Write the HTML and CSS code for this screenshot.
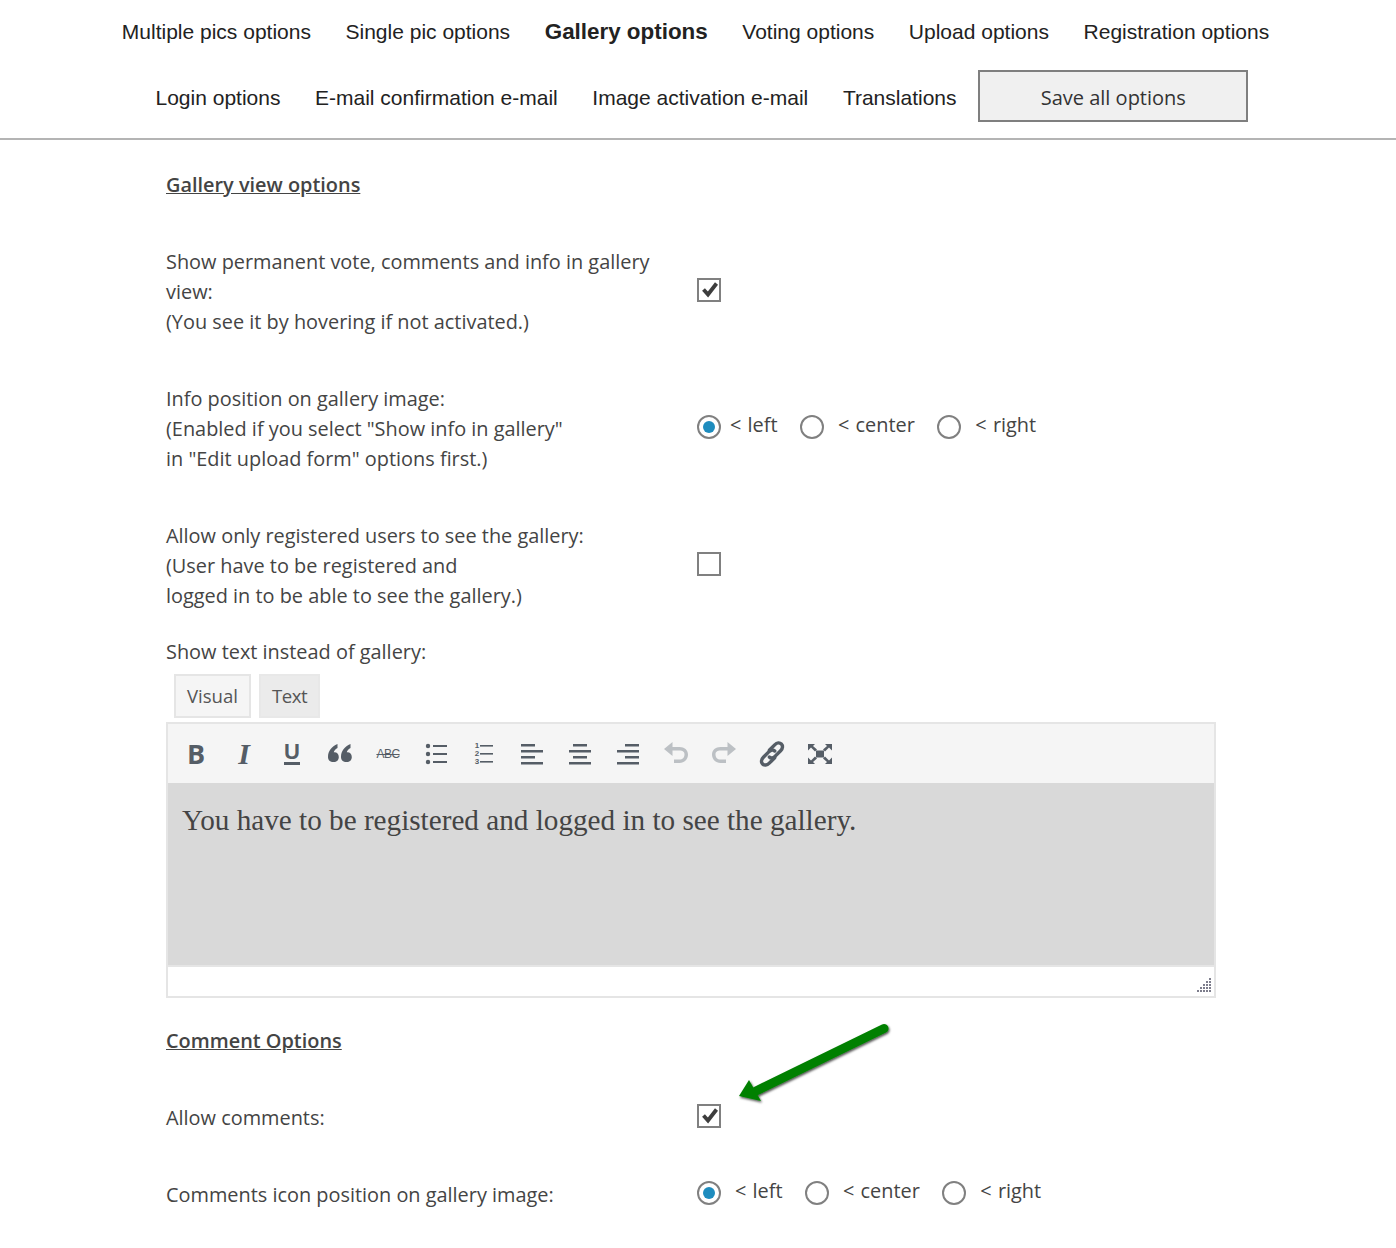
FILE: index.html
```html
<!DOCTYPE html>
<html>
	<head>
		<title>Gallery options</title>
		<link rel="stylesheet" href="styles.css">
	</head>

	<body>
		<div id="nav">
			<div class="navRow">
				<a class="navLink">Multiple pics options</a>
				<a class="navLink">Single pic options</a>
				<a class="navLink active">Gallery options</a>
				<a class="navLink">Voting options</a>
				<a class="navLink">Upload options</a>
				<a class="navLink">Registration options</a>
			</div>
			<div class="navRow second">
				<a class="navLink">Login options</a>
				<a class="navLink">E-mail confirmation e-mail</a>
				<a class="navLink">Image activation e-mail</a>
				<a class="navLink">Translations</a>
				<button id="saveAll">Save all options</button>
			</div>
		</div>

		<div id="main">
			<div class="heading first">Gallery view options</div>

			<div class="row">
				<div class="label">Show permanent vote, comments and info in gallery view:<br>(You see it by hovering if not activated.)</div>
				<label class="check">
					<input type="checkbox" checked>
					<svg viewBox="0 0 24 24"><path d="M6.500 11.500L11 16.500 19.500 5.500" fill="none" stroke="#3d3d3d" stroke-width="3.800"/></svg>
				</label>
			</div>

			<div class="row">
				<div class="label">Info position on gallery image:<br>(Enabled if you select "Show info in gallery"<br>in "Edit upload form" options first.)</div>
				<div class="radios">
					<input type="radio" name="info" checked><span class="radioText firstText">&lt; left</span>
					<input type="radio" name="info"><span class="radioText">&lt; center</span>
					<input type="radio" name="info"><span class="radioText">&lt; right</span>
				</div>
			</div>

			<div class="row">
				<div class="label">Allow only registered users to see the gallery:<br>(User have to be registered and<br>logged in to be able to see the gallery.)</div>
				<label class="check"><input type="checkbox"></label>
			</div>

			<div class="label textLabel">Show text instead of gallery:</div>

			<div id="tabs">
				<div class="tab">Visual</div>
				<div class="tab textTab">Text</div>
			</div>

			<div id="editor">
				<div id="toolbar">
					<div class="tool"><span class="letterB">B</span></div>
					<div class="tool"><span class="letterI">I</span></div>
					<div class="tool"><span class="letterU">U</span></div>
					<div class="tool">
						<svg class="bigIcon" viewBox="0 0 24 20"><path d="M0 13C0 7 3.500 2.500 9.500 0v4C7 5.500 6 7 5.800 8.200c2.700-.4 5 1.400 5 4.700 0 3-2 5.100-5.200 5.100C2 18 0 16 0 13zM13 13c0-6 3.500-10.500 9.500-13v4C20 5.500 19 7 18.800 8.200c2.700-.4 5 1.400 5 4.700 0 3-2 5.100-5.200 5.100C15 18 13 16 13 13z" fill="#555d66"/></svg>
					</div>
					<div class="tool"><span class="letterS">ABC</span></div>
					<div class="tool">
						<svg viewBox="0 0 24 24"><g fill="#555d66"><circle cx="4" cy="4" r="2.200"/><circle cx="4" cy="12" r="2.200"/><circle cx="4" cy="20" r="2.200"/><rect x="9" y="3" width="14" height="2"/><rect x="9" y="11" width="14" height="2"/><rect x="9" y="19" width="14" height="2"/></g></svg>
					</div>
					<div class="tool olTool">
						<span class="olNums"><span>1</span><span>2</span><span>3</span></span>
						<svg viewBox="0 0 14 24"><g fill="#555d66"><rect x="1" y="3" width="13" height="1.600"/><rect x="1" y="11" width="13" height="1.600"/><rect x="1" y="19" width="13" height="1.600"/></g></svg>
					</div>
					<div class="tool">
						<svg viewBox="0 0 24 24"><g fill="#555d66"><rect x="1" y="2" width="14" height="2.500"/><rect x="1" y="8" width="22" height="2.500"/><rect x="1" y="14" width="14" height="2.500"/><rect x="1" y="20" width="22" height="2.500"/></g></svg>
					</div>
					<div class="tool">
						<svg viewBox="0 0 24 24"><g fill="#555d66"><rect x="5" y="2" width="14" height="2.500"/><rect x="1" y="8" width="22" height="2.500"/><rect x="5" y="14" width="14" height="2.500"/><rect x="1" y="20" width="22" height="2.500"/></g></svg>
					</div>
					<div class="tool">
						<svg viewBox="0 0 24 24"><g fill="#555d66"><rect x="9" y="2" width="14" height="2.500"/><rect x="1" y="8" width="22" height="2.500"/><rect x="9" y="14" width="14" height="2.500"/><rect x="1" y="20" width="22" height="2.500"/></g></svg>
					</div>
					<div class="tool">
						<svg class="wideIcon" viewBox="0 0 26 24"><path d="M1 7L9.500 0v5h7c5 0 8.500 3 8.500 7.500S21.500 21 16.500 21H11v-3.500h5.500c3 0 5-2 5-5s-2-4-5-4h-7V14z" fill="#bcc0c4"/></svg>
					</div>
					<div class="tool">
						<svg class="wideIcon" viewBox="0 0 26 24"><path d="M25 7L16.500 0v5h-7C4.500 5 1 8 1 12.500S4.500 21 9.500 21H15v-3.500H9.500c-3 0-5-2-5-5s2-4 5-4h7V14z" fill="#bcc0c4"/></svg>
					</div>
					<div class="tool">
						<svg class="linkIcon" viewBox="0 0 26 26"><g fill="none" stroke="#555d66" stroke-width="3.200" stroke-linecap="round"><path d="M10.500 9.500l5-5c2.200-2.200 4.700-2.200 6.200-.7s1.500 4-.7 6.200l-5 5c-2.200 2.200-4.200 2.200-5.500.8"/><path d="M15.500 16.500l-5 5c-2.200 2.200-4.700 2.200-6.200.7s-1.500-4 .7-6.200l5-5c2.200-2.200 4.200-2.200 5.500-.8"/></g></svg>
					</div>
					<div class="tool">
						<svg class="wideIcon" viewBox="0 0 26 24"><g fill="#555d66"><rect x="9" y="8.500" width="8" height="7"/><path d="M1 2h7L6 4l4 3.500-2 2L4 5.500 1 8.500zM25 2h-7l2 2-4 3.500 2 2 4-4 3 3zM1 22h7l-2-2 4-3.500-2-2-4 4-3-3zM25 22h-7l2-2-4-3.500 2-2 4 4 3-3z"/></g></svg>
					</div>
				</div>
				<div id="content">You have to be registered and logged in to see the gallery.</div>
				<div id="statusbar">
					<svg id="grip" viewBox="0 0 14 14"><g fill="#7d7d8c"><rect x="12" y="0" width="2" height="2"/><rect x="9" y="3" width="2" height="2"/><rect x="12" y="3" width="2" height="2"/><rect x="6" y="6" width="2" height="2"/><rect x="9" y="6" width="2" height="2"/><rect x="12" y="6" width="2" height="2"/><rect x="3" y="9" width="2" height="2"/><rect x="6" y="9" width="2" height="2"/><rect x="9" y="9" width="2" height="2"/><rect x="12" y="9" width="2" height="2"/><rect x="0" y="12" width="2" height="2"/><rect x="3" y="12" width="2" height="2"/><rect x="6" y="12" width="2" height="2"/><rect x="9" y="12" width="2" height="2"/><rect x="12" y="12" width="2" height="2"/></g></svg>
				</div>
			</div>

			<div class="heading">Comment Options</div>

			<div class="row">
				<div class="label">Allow comments:</div>
				<label class="check">
					<input type="checkbox" checked>
					<svg viewBox="0 0 24 24"><path d="M6.500 11.500L11 16.500 19.500 5.500" fill="none" stroke="#3d3d3d" stroke-width="3.800"/></svg>
				</label>
			</div>

			<div class="row">
				<div class="label">Comments icon position on gallery image:</div>
				<div class="radios wide">
					<input type="radio" name="comment" checked><span class="radioText firstText">&lt; left</span>
					<input type="radio" name="comment"><span class="radioText">&lt; center</span>
					<input type="radio" name="comment"><span class="radioText">&lt; right</span>
				</div>
			</div>
		</div>

		<!-- arrow lies on top of the page -->
		<svg id="arrow" viewBox="0 0 170 100">
			<defs>
				<filter id="shade" x="-10%" y="-10%" width="120%" height="130%">
					<feDropShadow dx="1" dy="1.500" stdDeviation="1" flood-color="#000" flood-opacity="0.7"/>
				</filter>
			</defs>
			<g filter="url(#shade)">
				<path d="M144 8.500L16 71" stroke="#008000" stroke-width="9" stroke-linecap="round" fill="none"/>
				<path d="M-1 76L9 60L21 81z" fill="#008000"/>
			</g>
		</svg>
	</body>
</html>
```

FILE: styles.css
```css
body {
	margin: 0;
	height: 1248px;
	position: relative;
	overflow: hidden;
	background: white;
	color: #444;
	font-family: "Open Sans", sans-serif;
	font-size: 19.900px;
}

#nav {
	height: 138px;
	padding-right: 5px;
	border-bottom: 2px solid #b4b4b4;
}

.navRow {
	display: flex;
	justify-content: center;
	height: 64px;
	align-items: center;
}

.navRow.second {
	height: 74px;
	align-items: flex-start;
}

.navLink {
	padding: 0 17.300px;
	color: #222;
	font-family: "Liberation Sans", sans-serif;
	font-size: 21px;
	white-space: nowrap;
}

.navRow.second .navLink {
	line-height: 68px;
}

.navLink.active {
	font-size: 22.400px;
	font-weight: bold;
}

#saveAll {
	width: 270px;
	height: 52px;
	margin: 6px 4.500px 0;
	border: 2px solid #7f7f7f;
	background: #f0f0f0;
	color: #333;
	font-family: "Open Sans", sans-serif;
	font-size: 20px;
	padding: 2px 0 0;
}

#main {
	width: 1050px;
	padding-left: 166px;
}

.heading {
	margin-top: 28px;
	font-weight: 600;
	line-height: 30px;
	text-decoration: underline;
}

.heading.first {
	margin-top: 30px;
}

.row {
	display: flex;
	align-items: center;
	margin-top: 47px;
}

.label {
	width: 531px;
	padding-right: 40px;
	box-sizing: border-box;
	line-height: 30px;
}

.textLabel {
	margin-top: 26px;
	width: auto;
}

.check {
	position: relative;
	width: 24px;
	height: 24px;
	margin-top: -4px;
}

.check input {
	appearance: none;
	display: block;
	box-sizing: border-box;
	width: 24px;
	height: 24px;
	margin: 0;
	border: 2px solid #808080;
	background: white;
}

.check svg {
	position: absolute;
	left: 0;
	top: 0;
	width: 24px;
	height: 24px;
}

.radios {
	display: flex;
	align-items: center;
	margin-top: -4px;
}

.radios input {
	appearance: none;
	box-sizing: border-box;
	display: flex;
	align-items: center;
	justify-content: center;
	width: 24px;
	height: 24px;
	margin: 0;
	border: 2px solid #808080;
	border-radius: 50%;
	background: white;
}

.radios input:checked::before {
	content: "";
	width: 12px;
	height: 12px;
	border-radius: 50%;
	background: #1e8cbe;
}

.radioText {
	margin: -6px 22.500px 0 14px;
	word-spacing: 1px;
}

.radioText.firstText {
	margin-left: 9px;
}

.radios.wide .radioText.firstText {
	margin-left: 14px;
}

#tabs {
	display: flex;
	gap: 8px;
	margin: 7px 0 4px 8px;
}

.tab {
	height: 44px;
	width: 77px;
	box-sizing: border-box;
	border: 2px solid #e5e5e5;
	background: #f5f5f5;
	font-size: 18.600px;
	line-height: 40px;
	text-align: center;
	color: #555;
}

.tab.textTab {
	width: 61px;
	background: #ebebeb;
	border-color: #e8e8e8;
	letter-spacing: -0.500px;
}

#editor {
	height: 276px;
	box-sizing: border-box;
	border: 2px solid #e5e5e5;
}

#toolbar {
	display: flex;
	height: 59px;
	padding-left: 4px;
	background: #f5f5f5;
}

.tool {
	display: flex;
	align-items: center;
	justify-content: center;
	width: 48px;
	height: 59px;
	color: #555d66;
	font-family: "Liberation Sans", sans-serif;
}

.tool svg {
	width: 24px;
	height: 24px;
}

.tool svg.bigIcon {
	width: 24px;
	height: 20px;
}

.tool svg.wideIcon {
	width: 26px;
	height: 24px;
}

.tool svg.linkIcon {
	width: 28px;
	height: 28px;
}

.letterB {
	font-family: "Open Sans", sans-serif;
	font-size: 27px;
	font-weight: 700;
	line-height: 30px;
}

.letterI {
	font-family: "Liberation Serif", serif;
	font-size: 30px;
	font-style: italic;
	font-weight: bold;
}

.letterU {
	border-bottom: 3px solid #555d66;
	font-size: 22px;
	font-weight: bold;
	line-height: 20px;
}

.letterS {
	font-size: 12px;
	letter-spacing: -0.500px;
	text-decoration: line-through;
}

.tool.olTool svg {
	width: 14px;
}

.olNums {
	display: flex;
	flex-direction: column;
	font-size: 8px;
	font-weight: bold;
	line-height: 8px;
}

#content {
	height: 182px;
	box-sizing: border-box;
	padding: 19px 14px;
	background: #d9d9d9;
	color: #444;
	font-family: "Liberation Serif", serif;
	font-size: 29.200px;
	line-height: 36px;
}

#statusbar {
	display: flex;
	justify-content: flex-end;
	align-items: flex-end;
	height: 31px;
	box-sizing: border-box;
	padding: 0 3px 4px 0;
	border-top: 2px solid #e5e5e5;
}

#grip {
	width: 14px;
	height: 14px;
}

#arrow {
	position: absolute;
	left: 740px;
	top: 1020px;
	width: 170px;
	height: 100px;
	overflow: visible;
}
```
